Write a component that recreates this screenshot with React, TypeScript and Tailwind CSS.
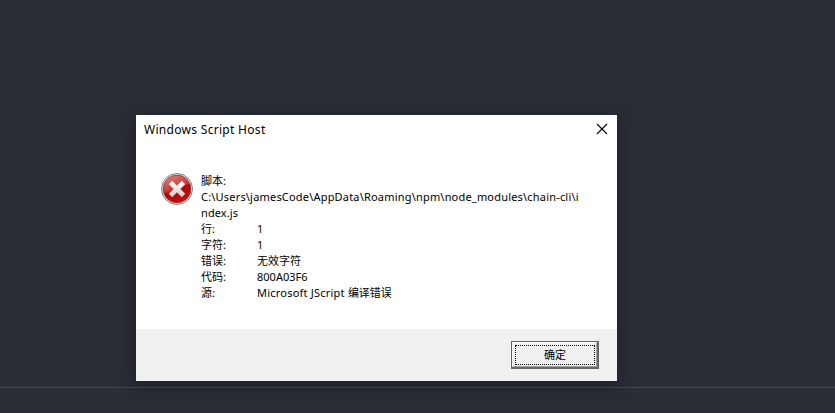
import type { ReactNode } from "react";

const fields = [
  { label: "行:", value: "1" },
  { label: "字符:", value: "1" },
  { label: "错误:", value: "无效字符" },
  { label: "代码:", value: "800A03F6" },
];

function ErrorIcon() {
  return (
    <svg width="34" height="34" viewBox="0 0 34 34" className="block shrink-0">
      <defs>
        <linearGradient id="red" x1="0.2" y1="0" x2="0.6" y2="1">
          <stop offset="0" stopColor="#dd827b" />
          <stop offset="0.48" stopColor="#c93a36" />
          <stop offset="0.56" stopColor="#b00808" />
          <stop offset="1" stopColor="#cc0d0d" />
        </linearGradient>
        <linearGradient id="cross" x1="0" y1="0" x2="0" y2="1">
          <stop offset="0" stopColor="#ffffff" />
          <stop offset="1" stopColor="#cccccc" />
        </linearGradient>
      </defs>
      <circle cx="17" cy="17" r="15.5" fill="#f1f1f1" stroke="#808080" strokeWidth="1" />
      <circle cx="17" cy="17" r="13.9" fill="url(#red)" stroke="#7c2a28" strokeWidth="0.7" />
      <path
        d="M9 12.2 12.2 9 17 13.8l4.8-4.8 3.2 3.2L20.2 17l4.8 4.8-3.2 3.2L17 20.2l-4.8 4.8L9 21.8l4.8-4.8Z"
        fill="url(#cross)"
        stroke="#e2d2d2"
        strokeWidth="0.5"
        strokeLinejoin="round"
      />
    </svg>
  );
}

function Line({ children }: { children: ReactNode }) {
  return <div className="flex h-4 whitespace-pre">{children}</div>;
}

export default function App() {
  return (
    <div className="flex h-[413px] w-[835px] flex-col overflow-hidden bg-[#292d36] bg-[linear-gradient(#464a52,#464a52)] bg-[length:100%_1px] bg-[position:0_387px] bg-no-repeat pl-[136px] pt-[115px] font-['Noto_Sans','Noto_Sans_CJK_SC',sans-serif] text-black">
      <section className="flex h-[266px] w-[481px] flex-col bg-white shadow-[0_4px_16px_1px_rgba(0,0,0,0.32)]">
        <header className="flex h-[30px] shrink-0 items-center justify-between pl-2 pr-[9px]">
          <h1 className="text-[12px] leading-[30px] tracking-[0.3px]">Windows Script Host</h1>
          <button aria-label="Close" className="mt-[-3px]">
            <svg width="12" height="12" viewBox="0 0 12 12" className="block">
              <path d="M1 1 11 11M11 1 1 11" stroke="#000" strokeWidth="1.1" />
            </svg>
          </button>
        </header>
        <div className="flex grow pl-6 pt-[27px]">
          <ErrorIcon />
          <div className="ml-[7px] mt-[1px] text-[11px] leading-4">
            <Line>脚本:</Line>
            <Line>
              <span className="tracking-[0.19px]">C:\Users\jamesCode\AppData\Roaming\npm\node_modules\chain-cli\i</span>
            </Line>
            <Line>
              <span className="tracking-[0.1px]">ndex.js</span>
            </Line>
            {fields.map((f) => (
              <Line key={f.label}>
                <span className="w-14">{f.label}</span>
                <span>{f.value}</span>
              </Line>
            ))}
            <Line>
              <span className="w-14">源:</span>
              <span className="tracking-[0.22px]">Microsoft JScript </span>
              <span>编译错误</span>
            </Line>
          </div>
        </div>
        <footer className="flex h-[52px] shrink-0 justify-end bg-[#f0f0f0] pr-[18px] pt-3">
          <button className="h-7 w-[88px] border border-[#646464] bg-[#696969] pb-px pr-px text-[11px]">
            <span className="flex h-full w-full border-b border-l border-r border-t border-b-[#a0a0a0] border-l-white border-r-[#a0a0a0] border-t-white bg-[#f0f0f0] pb-px pl-[2px] pr-px pt-[2px]">
              <span className="flex grow items-center justify-center border border-dotted border-black pb-[2px] leading-none">
                确定
              </span>
            </span>
          </button>
        </footer>
      </section>
    </div>
  );
}
